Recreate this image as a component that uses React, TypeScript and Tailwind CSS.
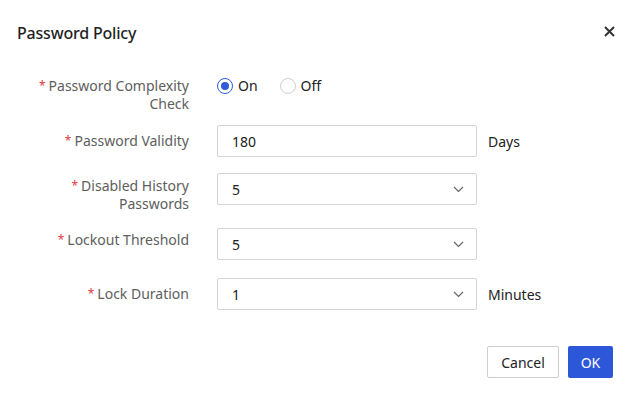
import React from 'react';

const font = { fontFamily: '"Noto Sans", "Open Sans", sans-serif' };

function Req({ children, pt }: { children: React.ReactNode; pt: string }) {
  // label column, right aligned with red asterisk
  return (
    <div className={`w-[189px] shrink-0 text-right text-[14px] leading-[18px] text-[#5e5e5e] ${pt}`}>
      <span className="text-[#e0393e] text-[12px] mr-[3px] align-[1px]">*</span>
      {children}
    </div>
  );
}

function Chevron() {
  return (
    <svg width="11" height="7" viewBox="0 0 11 7" className="shrink-0">
      <path d="M1 1l4.5 4.5L10 1" fill="none" stroke="#666" strokeWidth="1.2" />
    </svg>
  );
}

function Select({ value }: { value: string }) {
  return (
    <div className="w-[260px] h-[32px] border border-[#d4d4d4] rounded-[2px] flex items-center justify-between pl-[14px] pr-[12px] text-[14px] text-[#222]">
      <span>{value}</span>
      <Chevron />
    </div>
  );
}

function Radio({ checked, label }: { checked?: boolean; label: string }) {
  return (
    <div className="flex items-center gap-[5px] text-[14px] leading-[18px] text-[#222]">
      <span
        className={`w-[16px] h-[16px] rounded-full border flex items-center justify-center ${
          checked ? 'border-[#2f5bd9]' : 'border-[#cfcfcf]'
        }`}
      >
        {checked && <span className="w-[8px] h-[8px] rounded-full bg-[#2f5bd9]" />}
      </span>
      {label}
    </div>
  );
}

export default function App() {
  return (
    <div className="w-[635px] h-[394px] bg-white" style={font}>
      {/* Otsikko */}
      <div className="flex items-center justify-between pl-[17px] pr-[20px] pt-[21px] h-[45px]">
        <h1 className="text-[16px] leading-[24px] font-medium text-[#1f1f1f] tracking-[-0.2px]">Password Policy</h1>
        <svg width="11" height="11" viewBox="0 0 11 11" className="mt-[-4px]">
          <path d="M1 1l9 9M10 1l-9 9" stroke="#333" strokeWidth="2" />
        </svg>
      </div>

      <div className="pt-[32px]">
        <div className="flex gap-[28px] h-[48px]">
          <Req pt="pt-0">
            Password Complexity
            <br />
            Check
          </Req>
          <div className="flex items-start gap-[22px] pt-0">
            <Radio checked label="On" />
            <Radio label="Off" />
          </div>
        </div>

        <div className="flex gap-[28px] h-[48px]">
          <Req pt="pt-[7px]">Password Validity</Req>
          <div className="flex items-start">
            <div className="w-[260px] h-[32px] border border-[#d4d4d4] rounded-[2px] flex items-center pl-[14px] text-[14px] text-[#222]">
              180
            </div>
            <span className="ml-[11px] h-[32px] flex items-center text-[14px] text-[#222]">Days</span>
          </div>
        </div>

        <div className="flex gap-[28px] h-[55px]">
          <Req pt="pt-[4px]">
            Disabled History
            <br />
            Passwords
          </Req>
          <Select value="5" />
        </div>

        <div className="flex gap-[28px] h-[50px]">
          <Req pt="pt-[3px]">Lockout Threshold</Req>
          <Select value="5" />
        </div>

        <div className="flex gap-[28px] h-[68px]">
          <Req pt="pt-[7px]">Lock Duration</Req>
          <div className="flex items-start">
            <Select value="1" />
            <span className="ml-[11px] h-[32px] flex items-center text-[14px] text-[#222]">Minutes</span>
          </div>
        </div>
      </div>

      <div className="flex justify-end gap-[9px] pr-[22px]">
        <button className="w-[72px] h-[32px] border border-[#cfcfcf] rounded-[2px] text-[14px] text-[#222] bg-white">
          Cancel
        </button>
        <button className="w-[45px] h-[32px] rounded-[2px] text-[14px] text-white bg-[#2d57d9]">OK</button>
      </div>
    </div>
  );
}
